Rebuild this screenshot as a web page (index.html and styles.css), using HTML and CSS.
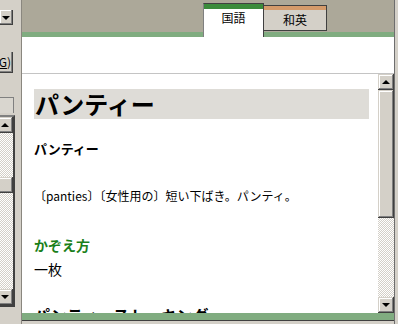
FILE: index.html
```html
<!DOCTYPE html>
<html lang="ja">
<head>
  <meta charset="UTF-8" />
  <title>辞書 - パンティー</title>
  <link rel="stylesheet" href="styles.css">
</head>
<body>
  <div class="window">
    <aside class="sidebar">
      <div class="combo"><span class="arrow-down"></span></div>
      <div class="search-btn">検索(<u>G</u>)</div>
      <div class="field"></div>
      <div class="listbox">
        <div class="lb-scroll">
          <span class="sb-btn"><span class="arrow-up"></span></span>
          <span class="sb-track lb-track-top"></span>
          <span class="sb-thumb lb-thumb"></span>
          <span class="sb-track lb-track-rest"></span>
          <span class="sb-btn"><span class="arrow-down"></span></span>
        </div>
      </div>
    </aside>

    <main class="main">
      <div class="tabbar">
        <div class="tab tab-active">国語</div>
        <div class="tab tab-second">和英</div>
      </div>
      <div class="header-space"></div>

      <div class="body">
        <div class="content">
          <h1 class="entry-title">パンティー</h1>
          <p class="reading">パンティー</p>
          <p class="definition">〔panties〕〔女性用の〕短い下ばき。パンティ。</p>
          <h3 class="section-title">かぞえ方</h3>
          <p class="section-text">一枚</p>
          <h2 class="next-entry">パンティーストッキング</h2>
        </div>
        <div class="vscroll">
          <span class="sb-btn"><span class="arrow-up"></span></span>
          <span class="sb-thumb main-thumb"></span>
          <span class="sb-track main-track"></span>
          <span class="sb-btn"><span class="arrow-down"></span></span>
        </div>
      </div>

      <div class="footer-band"></div>
    </main>
  </div>
</body>
</html>
```

FILE: styles.css
```css
:root {
  --face: #d4d0c8;
  --shadow: #808080;
  --dark: #404040;
  --strip: #aca899;
  --band: #80ac80;
  --tab-green: #3b8b3b;
  --tab-tan: #d49a6a;
  --green-text: #1a7f1a;
}

* {
  box-sizing: border-box;
  margin: 0;
  padding: 0;
}

body {
  width: 398px;
  height: 324px;
  overflow: hidden;
  background: var(--face);
  font-family: "Noto Sans CJK JP", "Liberation Sans", sans-serif;
  color: #000;
}

.window {
  display: flex;
  height: 324px;
}

/* left pane (cut off) */
.sidebar {
  width: 22px;
  border-right: 1px solid #8a877f;
  overflow: hidden;
  padding-top: 10px;
}

.combo {
  width: 13px;
  height: 15px;
  background: var(--face);
  box-shadow: inset -1px -1px 0 var(--dark), inset -2px -2px 0 var(--shadow), inset 1px 1px 0 #fff;
  display: flex;
  align-items: center;
  justify-content: center;
  padding-right: 2px;
}

.search-btn {
  margin-top: 27px;
  width: 13px;
  height: 21px;
  font-size: 12px;
  line-height: 20px;
  direction: rtl;
  white-space: nowrap;
  overflow: hidden;
  padding-right: 2px;
  background: var(--face);
  box-shadow: inset -1px -1px 0 var(--dark), inset -2px -2px 0 var(--shadow);
}

.search-btn u {
  text-decoration: underline;
}

.field {
  margin-top: 24px;
  width: 14px;
  height: 16px;
  border-top: 1px solid var(--shadow);
  border-right: 1px solid var(--shadow);
  background: #d9d6cf;
}

.listbox {
  margin-top: 2px;
  width: 15px;
  height: 192px;
  border: 2px solid var(--dark);
  border-left: none;
  border-top-color: var(--shadow);
  overflow: hidden;
}

.lb-scroll {
  margin-left: -3px;
  width: 16px;
  height: 100%;
  display: flex;
  flex-direction: column;
}

.lb-track-top {
  height: 44px;
}

.lb-thumb {
  height: 15px;
}

.lb-track-rest {
  flex: 1;
}

/* scrollbar parts */
.sb-btn,
.sb-thumb {
  display: flex;
  align-items: center;
  justify-content: center;
  height: 16px;
  flex-shrink: 0;
  background: var(--face);
  box-shadow: inset -1px -1px 0 var(--dark), inset 1px 1px 0 var(--face), inset -2px -2px 0 var(--shadow), inset 2px 2px 0 #fff;
}

.sb-track {
  display: block;
  background-color: #fff;
  background-image: conic-gradient(var(--face) 25%, #fff 0 50%, var(--face) 0 75%, #fff 0);
  background-size: 2px 2px;
}

.arrow-up,
.arrow-down {
  width: 0;
  height: 0;
  border-left: 4px solid transparent;
  border-right: 4px solid transparent;
}

.arrow-up {
  border-bottom: 4px solid #000;
  margin-top: -1px;
}

.arrow-down {
  border-top: 4px solid #000;
}

/* main pane */
.main {
  width: 373px;
  border-right: 1px solid #6e6e6e;
  display: flex;
  flex-direction: column;
}

.tabbar {
  height: 37px;
  background: var(--strip);
  border-bottom: 5px solid var(--band);
  display: flex;
  align-items: flex-end;
  padding-left: 181px;
}

.tab {
  font-size: 12px;
  line-height: 14px;
  text-align: center;
}

.tab-active {
  width: 61px;
  height: 34px;
  margin-bottom: -5px;
  background: #fff;
  border-top: 1px solid var(--dark);
  border-left: 1px solid var(--shadow);
  border-right: 1px solid var(--dark);
  box-shadow: inset 0 5px 0 var(--tab-green);
  padding-top: 7px;
}

.tab-second {
  width: 63px;
  height: 26px;
  margin-bottom: 1px;
  background: var(--face);
  border-top: 1px solid var(--dark);
  border-right: 1px solid var(--dark);
  border-bottom: 1px solid var(--dark);
  box-shadow: inset 0 4px 0 var(--tab-tan);
  padding-top: 7px;
}

.header-space {
  height: 37px;
  background: #fff;
  border-bottom: 1px solid #c4c4c4;
}

.body {
  height: 239px;
  display: flex;
}

.content {
  flex: 1;
  background: #fff;
  overflow: hidden;
  padding: 15px 9px 0 12px;
}

.entry-title {
  height: 30px;
  background: #dedcd7;
  font-size: 24px;
  font-weight: bold;
  line-height: 30px;
  padding-left: 1px;
}

.reading {
  margin-top: 21px;
  font-size: 13px;
  font-weight: bold;
  line-height: 18px;
}

.definition {
  margin-top: 29px;
  font-size: 12px;
  line-height: 18px;
}

.section-title {
  margin-top: 30px;
  font-size: 14px;
  font-weight: bold;
  line-height: 20px;
  color: var(--green-text);
}

.section-text {
  margin-top: 4px;
  font-size: 14px;
  line-height: 20px;
}

.next-entry {
  margin-top: 25px;
  font-size: 16px;
  font-weight: bold;
  line-height: 22px;
  white-space: nowrap;
}

.vscroll {
  width: 16px;
  display: flex;
  flex-direction: column;
}

.main-thumb {
  height: 128px;
}

.main-track {
  flex: 1;
}

.footer-band {
  height: 8px;
  background: var(--band);
  border-bottom: 1px solid var(--dark);
}
```
